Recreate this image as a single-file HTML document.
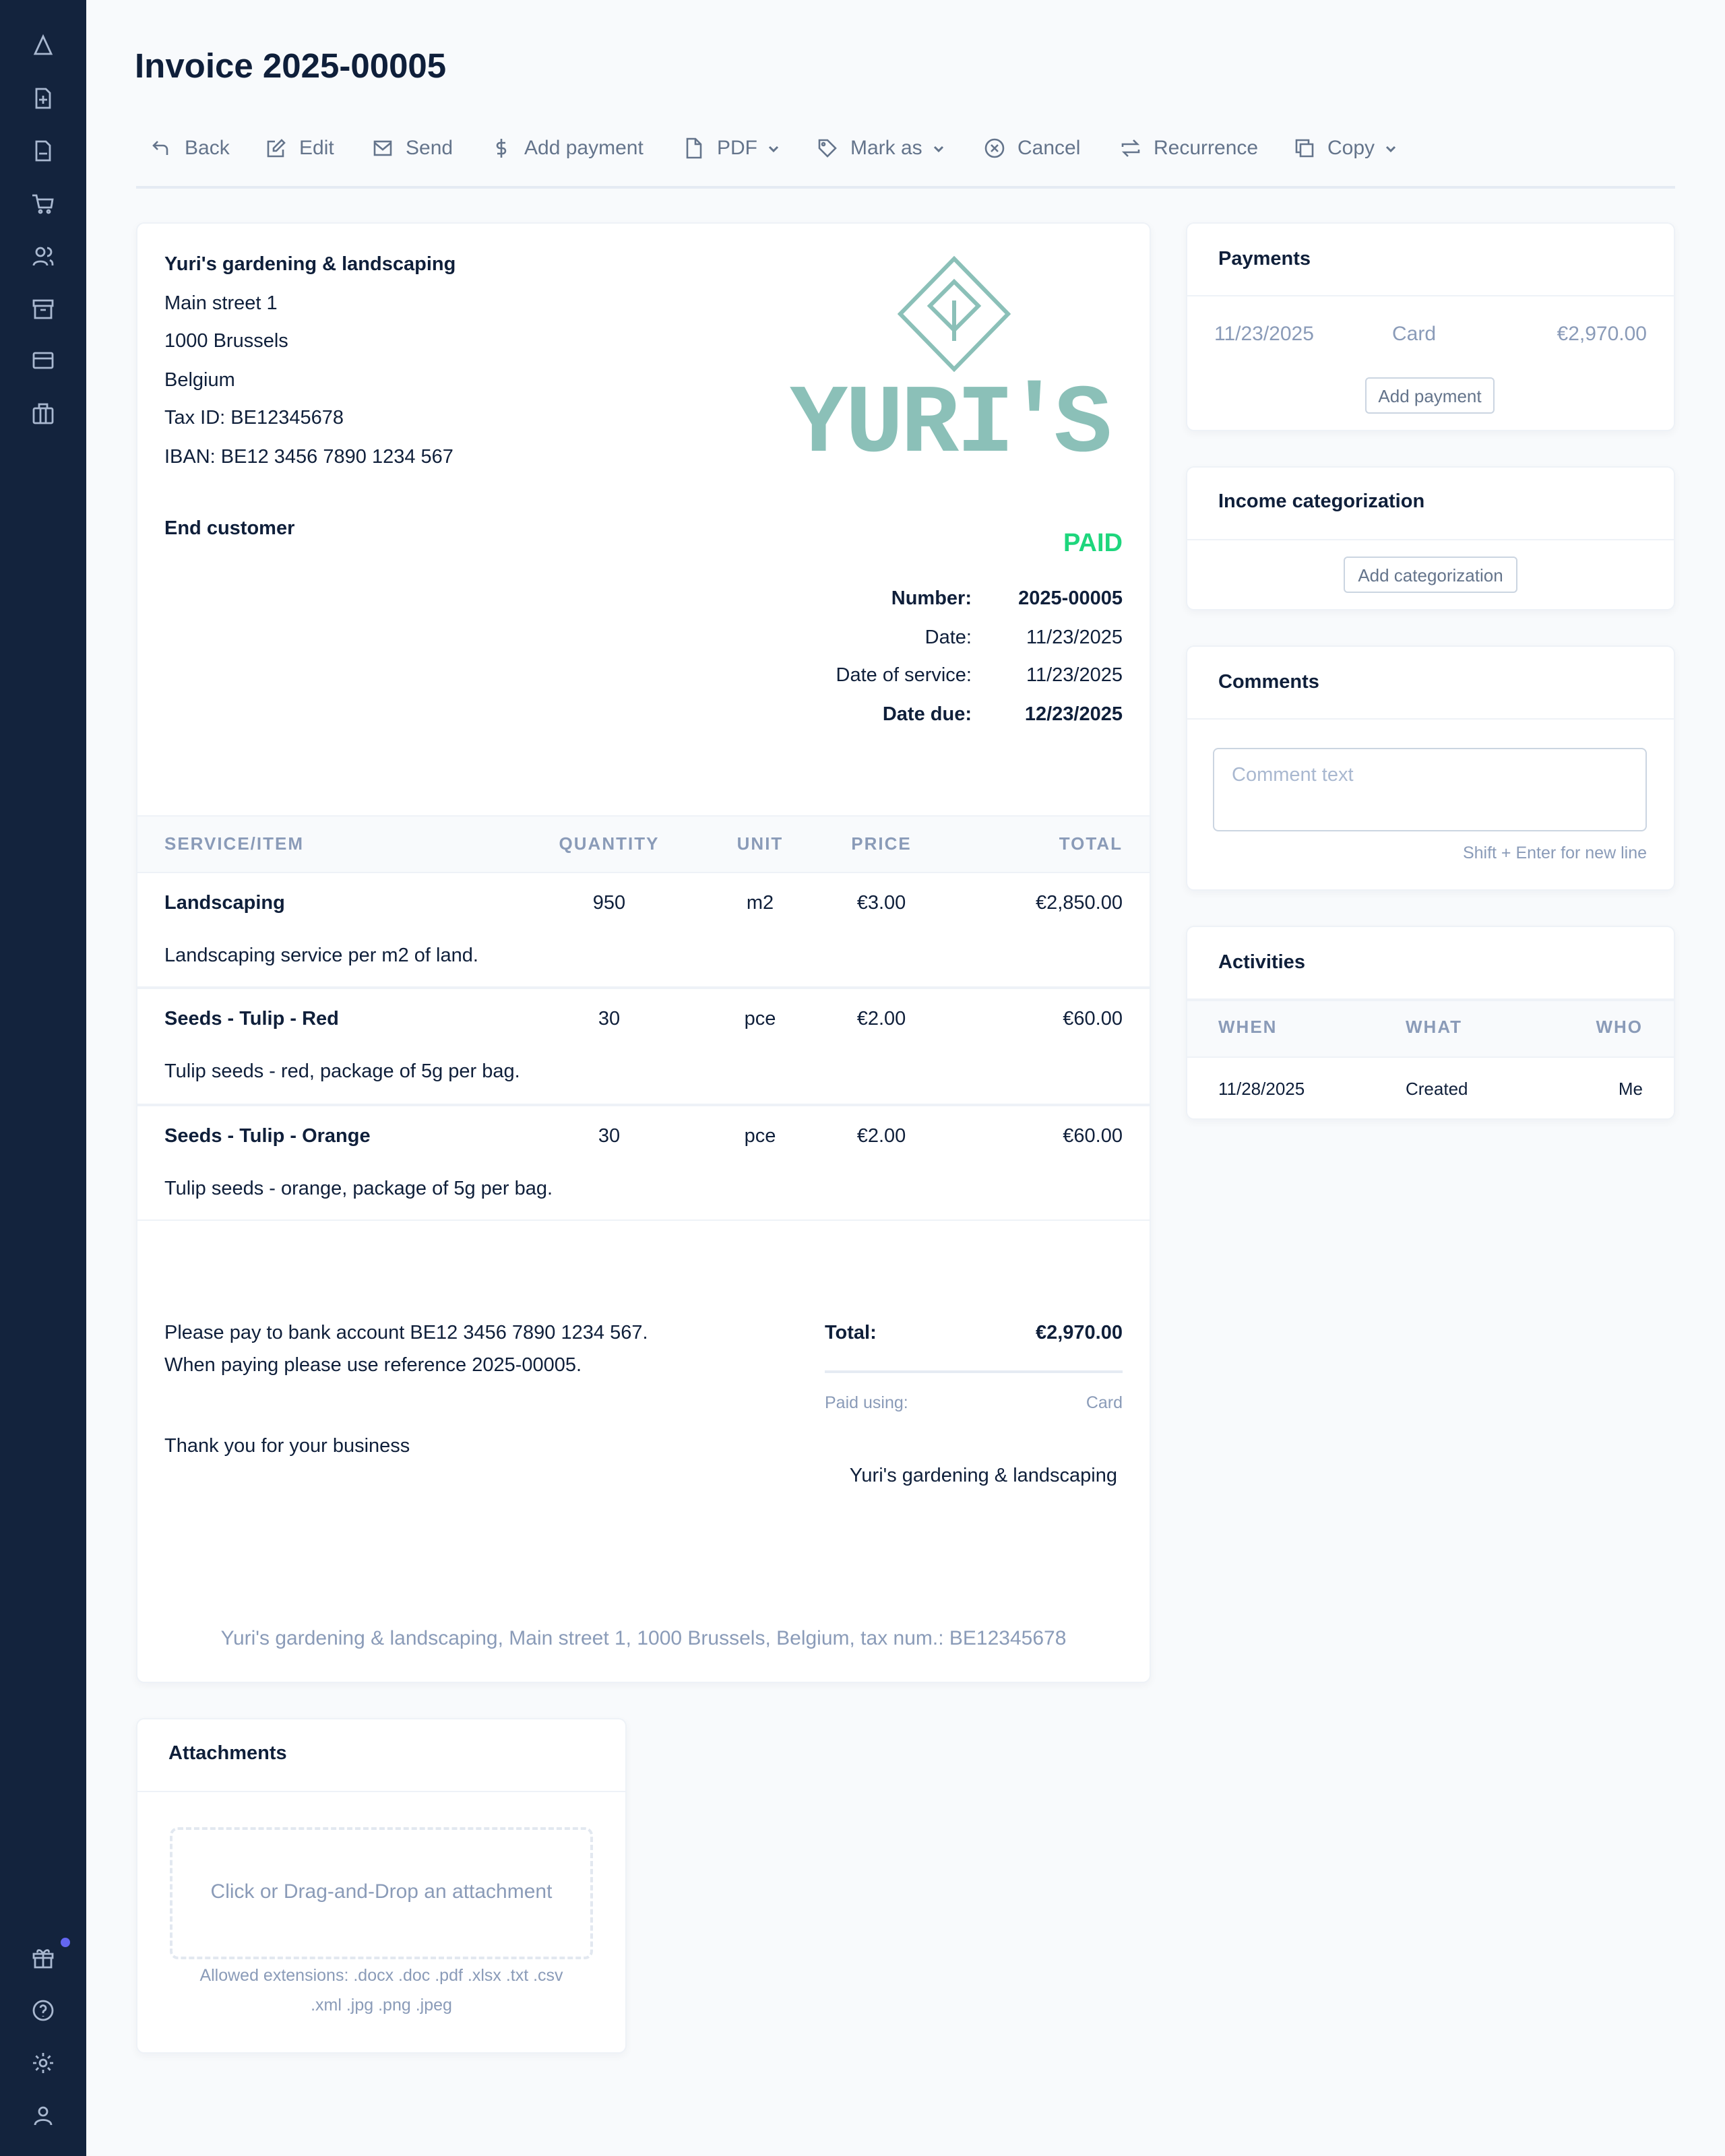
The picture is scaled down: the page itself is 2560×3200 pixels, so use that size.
<!DOCTYPE html>
<html><head><meta charset="utf-8"><style>
*{margin:0;padding:0;box-sizing:border-box}
html,body{width:2560px;height:3200px;overflow:hidden;background:#f8fafc}
#w{zoom:2;width:1280px;height:1600px;position:relative;font-family:"Liberation Sans",sans-serif;color:#0f1f3a;font-size:14.5px}
.t{position:absolute;line-height:20px;white-space:nowrap}
.r{text-align:right}
.c{text-align:center}
.b{font-weight:bold}
.sb{position:absolute;left:0;top:0;width:64px;height:1600px;background:#13233d}
.ic{position:absolute;left:23px;width:18px;height:18px}
.card{position:absolute;background:#fff;border:1px solid #eef2f7;border-radius:6px;box-shadow:0 2px 6px rgba(15,31,58,.04)}
.hd{position:absolute;left:0;right:0;border-top:1px solid #eef2f7}
.tb{position:absolute;top:100px;color:#64748b;font-size:15px;line-height:20px;white-space:nowrap}
.tb svg{position:absolute;left:0;top:2px}
.ch{display:inline-block;vertical-align:middle;margin-left:6px}
.btn{position:absolute;border:1px solid #cbd5e1;border-radius:3px;color:#64748b;font-size:13px;line-height:26px;text-align:center;background:#fff}
.g{color:#8a9bb8}
.th{color:#8a9bb8;font-weight:bold;font-size:13px;letter-spacing:1px}
</style></head><body><div id="w">
<div class="sb">
<svg class="ic" style="top:25px" viewBox="0 0 18 18" fill="none" stroke="#a9b8d0" stroke-width="1.4"><path d="M9 2L3 15h12z"/></svg>
<svg class="ic" style="top:64px" viewBox="0 0 18 18" fill="none" stroke="#a9b8d0" stroke-width="1.4"><path d="M4 2h7l3 3v11H4z M9 7v6M6 10h6"/></svg>
<svg class="ic" style="top:103px" viewBox="0 0 18 18" fill="none" stroke="#a9b8d0" stroke-width="1.4"><path d="M4 2h7l3 3v11H4z M6 11h6"/></svg>
<svg class="ic" style="top:142px" viewBox="0 0 18 18" fill="none" stroke="#a9b8d0" stroke-width="1.4"><path d="M1 3h3l2 9h9l1-6H5"/><circle cx="7" cy="15" r="1"/><circle cx="13" cy="15" r="1"/></svg>
<svg class="ic" style="top:181px" viewBox="0 0 18 18" fill="none" stroke="#a9b8d0" stroke-width="1.4"><circle cx="7" cy="6" r="3"/><path d="M2 16c0-4 10-4 10 0M12 3a3 3 0 010 6M14 12c2 1 2 2 2 4"/></svg>
<svg class="ic" style="top:220px" viewBox="0 0 18 18" fill="none" stroke="#a9b8d0" stroke-width="1.4"><path d="M2 3h14v4H2zM3 7v9h12V7M7 10h4"/></svg>
<svg class="ic" style="top:258px" viewBox="0 0 18 18" fill="none" stroke="#a9b8d0" stroke-width="1.4"><rect x="2" y="4" width="14" height="11" rx="1"/><path d="M2 8h14"/></svg>
<svg class="ic" style="top:298px" viewBox="0 0 18 18" fill="none" stroke="#a9b8d0" stroke-width="1.4"><rect x="2" y="5" width="14" height="11" rx="1"/><path d="M6 5V2h6v3M7 5v11M11 5v11"/></svg>
<svg class="ic" style="top:1444px" viewBox="0 0 18 18" fill="none" stroke="#a9b8d0" stroke-width="1.4"><path d="M2 6h14v3H2zM3 9v7h12V9M9 6v10M9 6c-2-4-5-3-4-1M9 6c2-4 5-3 4-1"/></svg>
<div style="position:absolute;left:45px;top:1438px;width:7px;height:7px;border-radius:50%;background:#6366f1"></div>
<svg class="ic" style="top:1483px" viewBox="0 0 18 18" fill="none" stroke="#a9b8d0" stroke-width="1.4"><circle cx="9" cy="9" r="7"/><path d="M7 7a2 2 0 113 2c-1 .5-1 1-1 2M9 13v.5"/></svg>
<svg class="ic" style="top:1522px" viewBox="0 0 18 18" fill="none" stroke="#a9b8d0" stroke-width="1.4"><circle cx="9" cy="9" r="2.5"/><path d="M9 1.5v2.5M9 14v2.5M1.5 9H4M14 9h2.5M3.7 3.7l1.8 1.8M12.5 12.5l1.8 1.8M3.7 14.3l1.8-1.8M12.5 5.5l1.8-1.8"/></svg>
<svg class="ic" style="top:1561px" viewBox="0 0 18 18" fill="none" stroke="#a9b8d0" stroke-width="1.4"><circle cx="9" cy="6" r="3"/><path d="M3 16c0-5 12-5 12 0"/></svg>
</div>

<div class="t b" style="left:100px;top:34px;font-size:25.5px;line-height:30px">Invoice 2025-00005</div>

<div class="tb" style="left:112px"><svg width="16" height="16" viewBox="0 0 16 16" fill="none" stroke="#64748b" stroke-width="1.3"><path d="M5 3L2 6l3 3M2 6h7a3 3 0 013 3v4"/></svg><span style="margin-left:25px">Back</span></div>
<div class="tb" style="left:197px"><svg width="16" height="16" viewBox="0 0 16 16" fill="none" stroke="#64748b" stroke-width="1.3"><path d="M7 3H2v11h11V9M12 2l2 2-6 6H6V8z"/></svg><span style="margin-left:25px">Edit</span></div>
<div class="tb" style="left:276px"><svg width="16" height="16" viewBox="0 0 16 16" fill="none" stroke="#64748b" stroke-width="1.3"><rect x="2" y="3" width="12" height="10"/><path d="M2 4l6 5 6-5"/></svg><span style="margin-left:25px">Send</span></div>
<div class="tb" style="left:364px"><svg width="16" height="16" viewBox="0 0 16 16" fill="none" stroke="#64748b" stroke-width="1.3"><path d="M8 1v14M11 4H7a2 2 0 000 4h2a2 2 0 010 4H5"/></svg><span style="margin-left:25px">Add payment</span></div>
<div class="tb" style="left:507px"><svg width="16" height="16" viewBox="0 0 16 16" fill="none" stroke="#64748b" stroke-width="1.3"><path d="M3 1h6l4 4v10H3zM9 1v4h4"/></svg><span style="margin-left:25px">PDF<svg class="ch" width="12" height="12" viewBox="0 0 12 12" fill="none" stroke="#64748b" stroke-width="1.5" style="position:static"><path d="M3 4.5l3 3 3-3"/></svg></span></div>
<div class="tb" style="left:606px"><svg width="16" height="16" viewBox="0 0 16 16" fill="none" stroke="#64748b" stroke-width="1.3"><path d="M2 2h6l6 6-6 6-6-6z"/><circle cx="5" cy="5" r="1"/></svg><span style="margin-left:25px">Mark as<svg class="ch" width="12" height="12" viewBox="0 0 12 12" fill="none" stroke="#64748b" stroke-width="1.5" style="position:static"><path d="M3 4.5l3 3 3-3"/></svg></span></div>
<div class="tb" style="left:730px"><svg width="16" height="16" viewBox="0 0 16 16" fill="none" stroke="#64748b" stroke-width="1.3"><circle cx="8" cy="8" r="6.5"/><path d="M5.5 5.5l5 5M10.5 5.5l-5 5"/></svg><span style="margin-left:25px">Cancel</span></div>
<div class="tb" style="left:831px"><svg width="16" height="16" viewBox="0 0 16 16" fill="none" stroke="#64748b" stroke-width="1.3"><path d="M2 7V5h11l-3-3M14 9v2H3l3 3"/></svg><span style="margin-left:25px">Recurrence</span></div>
<div class="tb" style="left:960px"><svg width="16" height="16" viewBox="0 0 16 16" fill="none" stroke="#64748b" stroke-width="1.3"><path d="M5 5h9v9H5zM11 5V2H2v9h3"/></svg><span style="margin-left:25px">Copy<svg class="ch" width="12" height="12" viewBox="0 0 12 12" fill="none" stroke="#64748b" stroke-width="1.5" style="position:static"><path d="M3 4.5l3 3 3-3"/></svg></span></div>
<div style="position:absolute;left:101px;top:138px;width:1142px;height:2px;background:#e5ebf3"></div>

<!-- main card -->
<div class="card" style="left:101px;top:165px;width:753px;height:1084px"></div>
<div class="t b" style="left:122px;top:186px">Yuri's gardening &amp; landscaping</div>
<div class="t" style="left:122px;top:215px">Main street 1</div>
<div class="t" style="left:122px;top:243px">1000 Brussels</div>
<div class="t" style="left:122px;top:272px">Belgium</div>
<div class="t" style="left:122px;top:300px">Tax ID: BE12345678</div>
<div class="t" style="left:122px;top:329px">IBAN: BE12 3456 7890 1234 567</div>
<svg style="position:absolute;left:666px;top:190px" width="84" height="86" viewBox="0 0 84 86" fill="none" stroke="#8bc0b8" stroke-width="3"><path d="M42 2L82 43 42 84 2 43z"/><path d="M42 19L60 37 42 55 24 37z"/><path d="M42 33v30"/></svg>
<div class="t b" style="left:586px;top:283px;font-family:'Liberation Mono',monospace;font-size:72px;line-height:66px;color:#8bc0b8;letter-spacing:-2px">YURI<span style="margin:0 -5px">'</span>S</div>
<div class="t b" style="left:122px;top:382px">End customer</div>
<div class="t b r" style="right:447px;top:391px;font-size:19px;line-height:24px;color:#1ed67d">PAID</div>
<div class="t b r" style="right:559px;top:434px">Number:</div><div class="t b r" style="right:447px;top:434px">2025-00005</div>
<div class="t r" style="right:559px;top:463px">Date:</div><div class="t r" style="right:447px;top:463px">11/23/2025</div>
<div class="t r" style="right:559px;top:491px">Date of service:</div><div class="t r" style="right:447px;top:491px">11/23/2025</div>
<div class="t b r" style="right:559px;top:520px">Date due:</div><div class="t b r" style="right:447px;top:520px">12/23/2025</div>

<div style="position:absolute;left:102px;top:605px;width:751px;height:43px;background:#f8fafc;border-top:1px solid #eef2f7;border-bottom:1px solid #eef2f7"></div>
<div class="t th" style="left:122px;top:616px">SERVICE/ITEM</div>
<div class="t th c" style="left:402px;width:100px;top:616px">QUANTITY</div>
<div class="t th c" style="left:524px;width:80px;top:616px">UNIT</div>
<div class="t th c" style="left:614px;width:80px;top:616px">PRICE</div>
<div class="t th r" style="right:447px;top:616px">TOTAL</div>

<div class="t b" style="left:122px;top:660px">Landscaping</div>
<div class="t c" style="left:402px;width:100px;top:660px">950</div>
<div class="t c" style="left:524px;width:80px;top:660px">m2</div>
<div class="t c" style="left:614px;width:80px;top:660px">€3.00</div>
<div class="t r" style="right:447px;top:660px">€2,850.00</div>
<div class="t" style="left:122px;top:699px">Landscaping service per m2 of land.</div>
<div style="position:absolute;left:102px;top:732px;width:751px;height:2px;background:#eef2f7"></div>

<div class="t b" style="left:122px;top:746px">Seeds - Tulip - Red</div>
<div class="t c" style="left:402px;width:100px;top:746px">30</div>
<div class="t c" style="left:524px;width:80px;top:746px">pce</div>
<div class="t c" style="left:614px;width:80px;top:746px">€2.00</div>
<div class="t r" style="right:447px;top:746px">€60.00</div>
<div class="t" style="left:122px;top:785px">Tulip seeds - red, package of 5g per bag.</div>
<div style="position:absolute;left:102px;top:819px;width:751px;height:2px;background:#eef2f7"></div>

<div class="t b" style="left:122px;top:833px">Seeds - Tulip - Orange</div>
<div class="t c" style="left:402px;width:100px;top:833px">30</div>
<div class="t c" style="left:524px;width:80px;top:833px">pce</div>
<div class="t c" style="left:614px;width:80px;top:833px">€2.00</div>
<div class="t r" style="right:447px;top:833px">€60.00</div>
<div class="t" style="left:122px;top:872px">Tulip seeds - orange, package of 5g per bag.</div>
<div style="position:absolute;left:102px;top:905px;width:751px;height:1px;background:#eef2f7"></div>

<div class="t" style="left:122px;top:979px">Please pay to bank account BE12 3456 7890 1234 567.</div>
<div class="t" style="left:122px;top:1003px">When paying please use reference 2025-00005.</div>
<div class="t" style="left:122px;top:1063px">Thank you for your business</div>
<div class="t b" style="left:612px;top:979px">Total:</div>
<div class="t b r" style="right:447px;top:979px">€2,970.00</div>
<div style="position:absolute;left:612px;top:1017px;width:221px;height:2px;background:#e5ebf3"></div>
<div class="t g" style="left:612px;top:1031px;font-size:12.5px">Paid using:</div>
<div class="t g r" style="right:447px;top:1031px;font-size:12.5px">Card</div>
<div class="t r" style="right:451px;top:1085px">Yuri's gardening &amp; landscaping</div>
<div class="t g c" style="left:101px;width:753px;top:1206px;font-size:15px">Yuri's gardening &amp; landscaping, Main street 1, 1000 Brussels, Belgium, tax num.: BE12345678</div>

<!-- payments -->
<div class="card" style="left:880px;top:165px;width:363px;height:155px"><div class="hd" style="top:53px"></div></div>
<div class="t b" style="left:904px;top:182px">Payments</div>
<div class="t g" style="left:901px;top:238px;font-size:15px">11/23/2025</div>
<div class="t g" style="left:1033px;top:238px;font-size:15px">Card</div>
<div class="t g r" style="right:58px;top:238px;font-size:15px">€2,970.00</div>
<div class="btn" style="left:1013px;top:280px;width:96px;height:27px">Add payment</div>

<div class="card" style="left:880px;top:346px;width:363px;height:107px"><div class="hd" style="top:53px"></div></div>
<div class="t b" style="left:904px;top:362px">Income categorization</div>
<div class="btn" style="left:997px;top:413px;width:129px;height:27px">Add categorization</div>

<div class="card" style="left:880px;top:479px;width:363px;height:182px"><div class="hd" style="top:53px"></div></div>
<div class="t b" style="left:904px;top:496px">Comments</div>
<div style="position:absolute;left:900px;top:555px;width:322px;height:62px;border:1px solid #cbd5e1;border-radius:4px;background:#fff"></div>
<div class="t" style="left:914px;top:565px;color:#a9b8d0">Comment text</div>
<div class="t g r" style="right:58px;top:623px;font-size:12.5px">Shift + Enter for new line</div>

<div class="card" style="left:880px;top:687px;width:363px;height:144px"><div class="hd" style="top:53px"></div></div>
<div class="t b" style="left:904px;top:704px">Activities</div>
<div style="position:absolute;left:881px;top:742px;width:361px;height:43px;background:#f8fafc;border-top:1px solid #eef2f7;border-bottom:1px solid #eef2f7"></div>
<div class="t th" style="left:904px;top:752px">WHEN</div>
<div class="t th" style="left:1043px;top:752px">WHAT</div>
<div class="t th r" style="right:61px;top:752px">WHO</div>
<div class="t" style="left:904px;top:798px;font-size:13px">11/28/2025</div>
<div class="t" style="left:1043px;top:798px;font-size:13px">Created</div>
<div class="t r" style="right:61px;top:798px;font-size:13px">Me</div>

<!-- attachments -->
<div class="card" style="left:101px;top:1275px;width:364px;height:249px"><div class="hd" style="top:53px"></div></div>
<div class="t b" style="left:125px;top:1291px">Attachments</div>
<div style="position:absolute;left:126px;top:1356px;width:314px;height:98px;border:2px dashed #e2e8f0;border-radius:6px"></div>
<div class="t g c" style="left:126px;width:314px;top:1394px;font-size:15px">Click or Drag-and-Drop an attachment</div>
<div class="t g c" style="left:101px;width:364px;top:1456px;font-size:12.5px">Allowed extensions: .docx .doc .pdf .xlsx .txt .csv</div>
<div class="t g c" style="left:101px;width:364px;top:1478px;font-size:12.5px">.xml .jpg .png .jpeg</div>
</div></body></html>
